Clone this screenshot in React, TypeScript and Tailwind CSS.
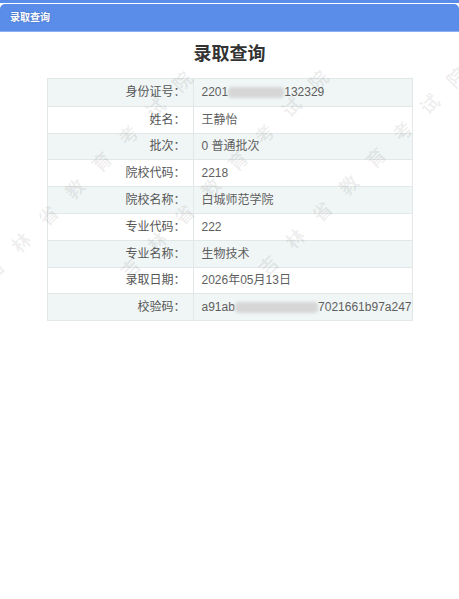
import React from "react";

type Row = { label: string; value: React.ReactNode };

// blurred part of a number (privacy mask)
function Mask({ className }: { className: string }) {
  return <span className={`inline-block h-[11px] rounded-sm bg-[#d6d6d6] blur-[1.5px] align-middle ${className}`} />;
}

const rows: Row[] = [
  {
    label: "身份证号：",
    value: (
      <>
        2201
        <Mask className="w-[56px]" />
        132329
      </>
    ),
  },
  { label: "姓名：", value: "王静怡" },
  { label: "批次：", value: "0 普通批次" },
  { label: "院校代码：", value: "2218" },
  { label: "院校名称：", value: "白城师范学院" },
  { label: "专业代码：", value: "222" },
  { label: "专业名称：", value: "生物技术" },
  { label: "录取日期：", value: "2026年05月13日" },
  {
    label: "校验码：",
    value: (
      <>
        a91ab
        <Mask className="w-[86px]" />
        7021661b97a247
      </>
    ),
  },
];

export default function App() {
  return (
    <div className="relative min-h-[599px] w-full overflow-hidden bg-white font-['Liberation_Sans','Noto_Sans_CJK_SC',sans-serif]">
      {/* top bar */}
      <div className="h-[3px] bg-[#5a8dea]" />
      <div className="h-px bg-white" />
      <div className="flex h-[28px] items-center rounded-t-[5px] border-b border-[#8db0f0] bg-[#5a8dea] px-[10px]">
        <span className="text-[10px] font-bold text-white [text-shadow:0_0_2px_rgba(0,0,0,0.25)]">录取查询</span>
      </div>

      {/* title */}
      <div className="flex h-[46px] items-center justify-center pb-[2px]">
        <h1 className="text-[18px] font-bold text-[#333]">录取查询</h1>
      </div>

      {/* result table */}
      <div className="mx-auto w-[366px] border border-[#e2e8e8]">
        {rows.map((row, i) => (
          <div
            key={row.label}
            className={`flex h-[26.8px] text-[12px] ${i > 0 ? "border-t border-[#e2e8e8]" : ""} ${
              i % 2 === 0 ? "bg-[#f0f5f5]" : "bg-white"
            }`}
          >
            <div className="flex w-[146px] shrink-0 items-center justify-end border-r border-[#e2e8e8] pr-[7px] text-[#555]">
              {row.label}
            </div>
            <div className="flex min-w-0 flex-1 items-center overflow-hidden whitespace-nowrap pl-[8px] text-[#5f5f5f]">
              {row.value}
            </div>
          </div>
        ))}
      </div>

      {/* watermark */}
      <div className="pointer-events-none absolute inset-0 select-none">
        <span className="absolute left-[88px] top-[175px] -translate-x-1/2 -translate-y-1/2 -rotate-45 whitespace-nowrap pl-[19px] text-[19px] font-bold tracking-[19px] text-black/[0.07] font-['Noto_Sans_CJK_SC',sans-serif]">
          吉林省教育考试院
        </span>
        <span className="absolute left-[224px] top-[174px] -translate-x-1/2 -translate-y-1/2 -rotate-45 whitespace-nowrap pl-[19px] text-[19px] font-bold tracking-[19px] text-black/[0.07] font-['Noto_Sans_CJK_SC',sans-serif]">
          吉林省教育考试院
        </span>
        <span className="absolute left-[362px] top-[171px] -translate-x-1/2 -translate-y-1/2 -rotate-45 whitespace-nowrap pl-[19px] text-[19px] font-bold tracking-[19px] text-black/[0.07] font-['Noto_Sans_CJK_SC',sans-serif]">
          吉林省教育考试院
        </span>
      </div>
    </div>
  );
}
